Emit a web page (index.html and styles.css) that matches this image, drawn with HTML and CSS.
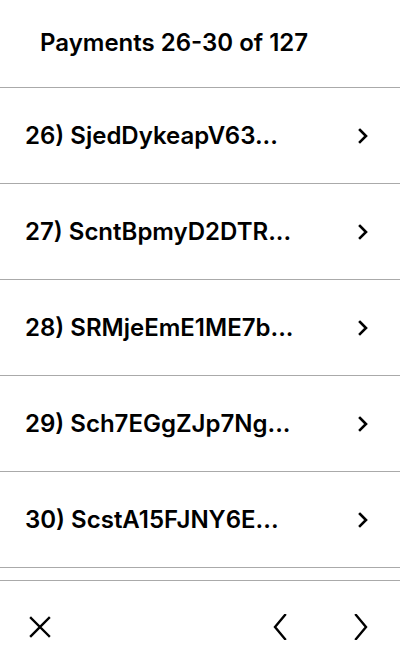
FILE: index.html
```html
<!DOCTYPE html>
<html>
<head>
<meta charset="utf-8">
<link rel="stylesheet" href="styles.css">
</head>
<body>
<div class="screen">
  <header class="header"><h1 class="title">Payments 26-30 of 127</h1></header>
  <ul class="list">
    <li class="row"><span class="label">26) SjedDykeapV63...</span><svg class="chev" viewBox="0 0 12 16"><path d="M3 2 L9 8 L3 14"/></svg></li>
    <li class="row"><span class="label">27) ScntBpmyD2DTR...</span><svg class="chev" viewBox="0 0 12 16"><path d="M3 2 L9 8 L3 14"/></svg></li>
    <li class="row"><span class="label">28) SRMjeEmE1ME7b...</span><svg class="chev" viewBox="0 0 12 16"><path d="M3 2 L9 8 L3 14"/></svg></li>
    <li class="row"><span class="label">29) Sch7EGgZJp7Ng...</span><svg class="chev" viewBox="0 0 12 16"><path d="M3 2 L9 8 L3 14"/></svg></li>
    <li class="row"><span class="label">30) ScstA15FJNY6E...</span><svg class="chev" viewBox="0 0 12 16"><path d="M3 2 L9 8 L3 14"/></svg></li>
  </ul>
  <footer class="footer">
    <svg class="icon close" viewBox="0 0 24 24"><path d="M3 3 L21 21 M21 3 L3 21"/></svg>
    <div class="nav">
      <svg class="icon arrow" viewBox="0 0 14 26"><path d="M12 1 L2 13 L12 25"/></svg>
      <svg class="icon arrow" viewBox="0 0 14 26"><path d="M2 1 L12 13 L2 25"/></svg>
    </div>
  </footer>
</div>
</body>
</html>
```

FILE: styles.css
```css
html, body {
  margin: 0;
  padding: 0;
  background: #fff;
}
.screen {
  width: 400px;
  height: 672px;
  display: flex;
  flex-direction: column;
  font-family: Inter, "Noto Sans", sans-serif;
  color: #000;
}
.header {
  border-bottom: 1px solid #aaaaaa;
  display: flex;
  align-items: center;
  box-sizing: border-box;
  padding: 0 0 0 40px;
  height: 88px;
}
.title {
  margin: 0;
  font-size: 24px;
  font-weight: 600;
  margin-top: -2px;
}
.list {
  list-style: none;
  margin: 0;
  padding: 0;
}
.row {
  height: 96px;
  box-sizing: border-box;
  border-bottom: 1px solid #aaaaaa;
  display: flex;
  align-items: center;
  justify-content: space-between;
  padding: 0 31px 0 25px;
}
.label {
  font-size: 24px;
  font-weight: 600;
}
.chev {
  width: 12px;
  height: 16px;
  fill: none;
  stroke: #000;
  stroke-width: 2.6;
  stroke-linecap: square;
}
.footer {
  margin-top: 12px;
  border-top: 1px solid #aaaaaa;
  flex: 1;
  display: flex;
  align-items: center;
  justify-content: space-between;
  padding: 0 32px 0 28px;
  box-sizing: border-box;
}
.nav {
  display: flex;
  gap: 67px;
}
.icon {
  fill: none;
  stroke: #000;
  stroke-width: 2.4;
  stroke-linecap: square;
}
.close {
  width: 24px;
  height: 24px;
}
.arrow {
  width: 14px;
  height: 26px;
}
```
